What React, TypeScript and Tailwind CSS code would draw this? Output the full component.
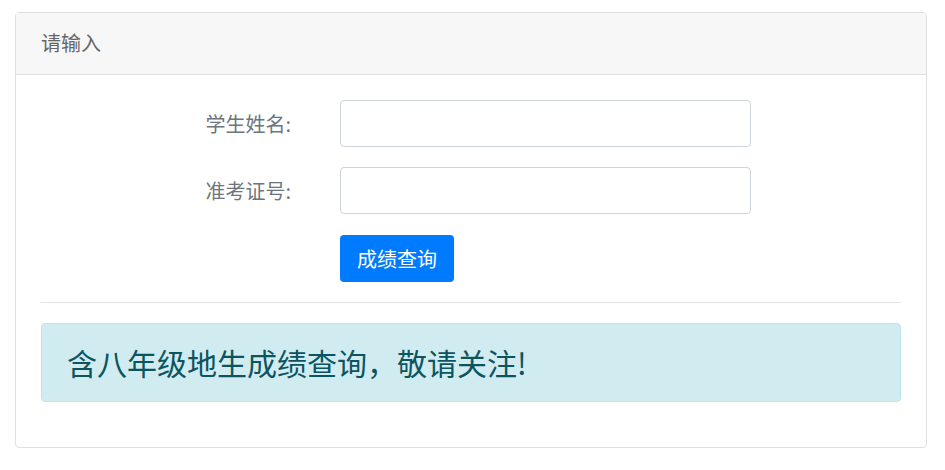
import React from "react";

const font = { fontFamily: '"Microsoft YaHei", "Noto Sans CJK SC", "Noto Sans", sans-serif' };

const Field: React.FC<{ label: string }> = ({ label }) => (
  <div className="flex items-center">
    <label className="w-[250px] text-right text-[20px] text-[#6c757d]">{label}</label>
    <input
      type="text"
      className="ml-[49px] h-[47px] w-[411px] rounded-[4px] border border-[#ced4da] bg-white px-3 outline-none"
    />
  </div>
);

export default function App() {
  return (
    <div className="min-h-[470px] bg-white px-[15px] pt-[12px]" style={font}>
      <div className="w-[912px] rounded-[4px] border border-[#dfdfdf] bg-white">
        {/* 卡片头 */}
        <div className="h-[62px] border-b border-[#dfdfdf] bg-[#f7f7f7] px-[25px] pt-[15px] text-[20px] leading-[30px] text-[#666]">
          请输入
        </div>

        {/* 卡片内容 */}
        <div className="px-[25px] pt-[25px] pb-[45px]">
          <div className="flex flex-col gap-[20px]">
            <Field label="学生姓名:" />
            <Field label="准考证号:" />
            <div className="mt-[1px] pl-[299px]">
              <button className="h-[47px] rounded-[4px] bg-[#007bff] px-[17px] text-[20px] text-white">
                成绩查询
              </button>
            </div>
          </div>

          <hr className="mt-[20px] border-[#e5e5e5]" />

          <div className="mt-[20px] flex h-[79px] items-center rounded-[4px] border border-[#bee5eb] bg-[#d1ecf1] px-[25px] text-[30px] text-[#0c5460]">
            含八年级地生成绩查询，敬请关注!
          </div>
        </div>
      </div>
    </div>
  );
}
